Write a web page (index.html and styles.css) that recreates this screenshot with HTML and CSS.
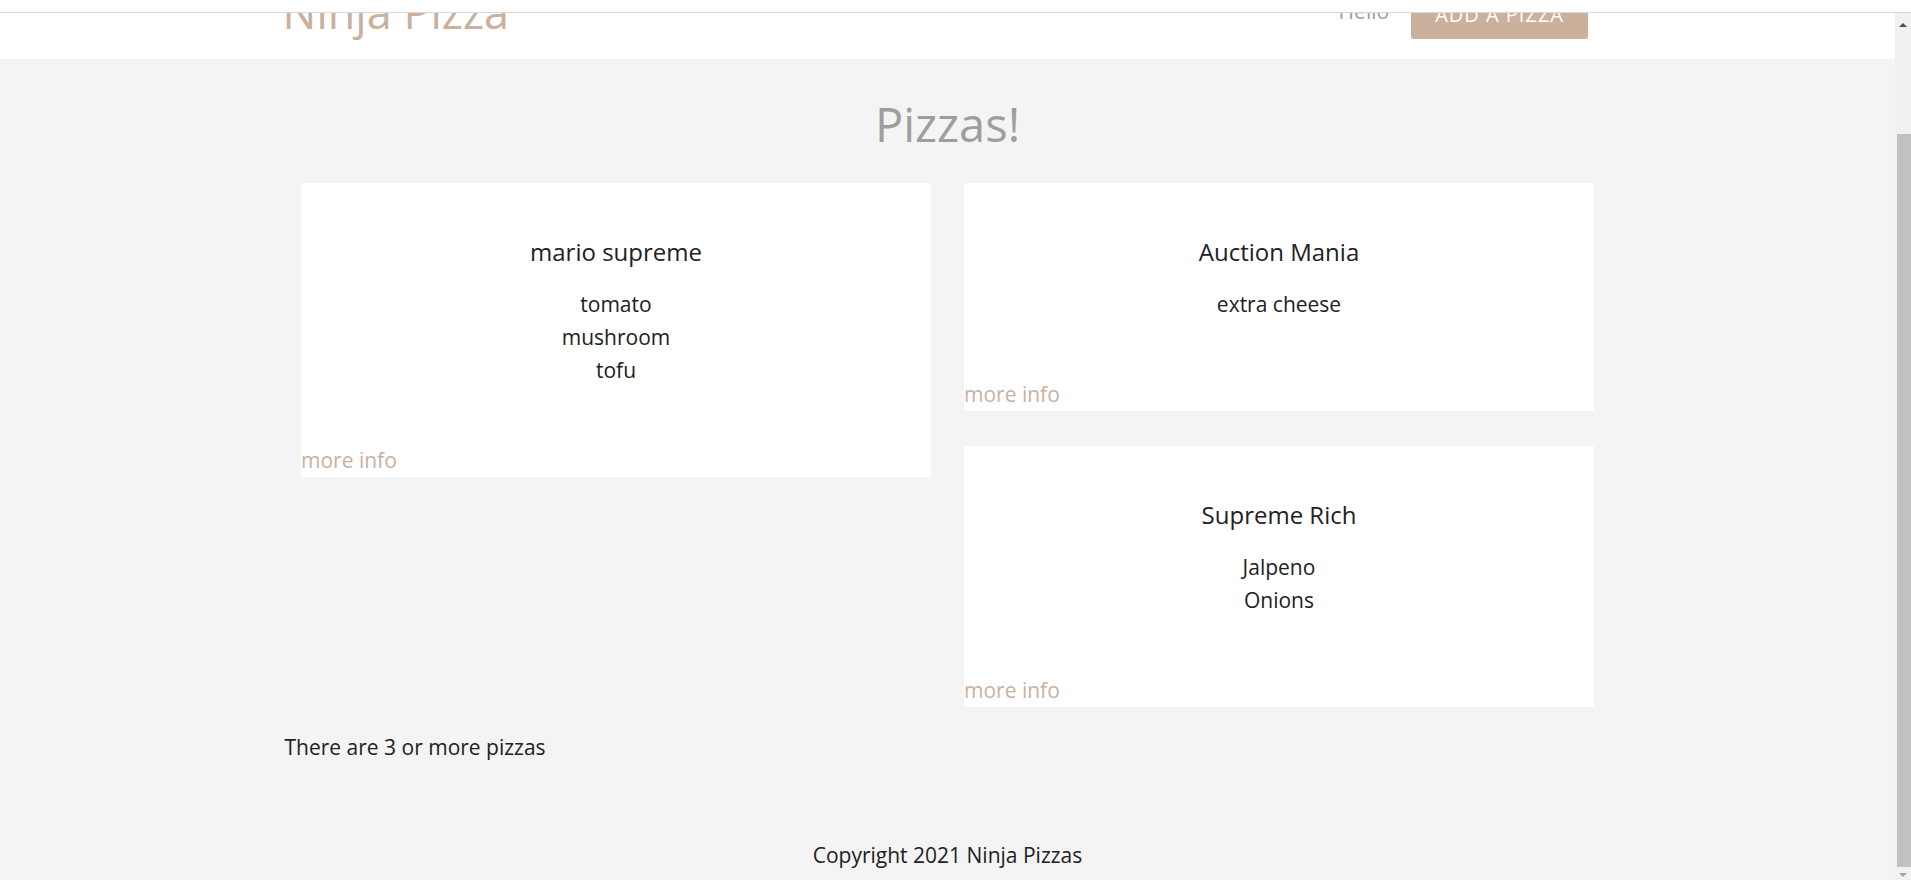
FILE: index.html
```html
<!DOCTYPE html>
<html lang="en">
<head>
<meta charset="utf-8">
<title>Ninja Pizza</title>
<link rel="stylesheet" href="styles.css">
</head>
<body>
  <div class="topbar"></div>
  <div class="window">
    <div class="viewport">
      <div class="page">
        <nav class="nav">
          <div class="nav-inner">
            <a href="#" class="brand-logo">Ninja Pizza</a>
            <div class="nav-right">
              <span class="hello">Hello</span>
              <a href="#" class="btn">Add a Pizza</a>
            </div>
          </div>
        </nav>

        <h4 class="title">Pizzas!</h4>

        <div class="cards">
          <div class="col">
            <div class="card">
              <h6 class="card-title">mario supreme</h6>
              <ul class="ingredients">
                <li>tomato</li>
                <li>mushroom</li>
                <li>tofu</li>
              </ul>
              <div class="card-action"><a href="#" class="more">more info</a></div>
            </div>
          </div>
          <div class="col">
            <div class="card">
              <h6 class="card-title">Auction Mania</h6>
              <ul class="ingredients">
                <li>extra cheese</li>
              </ul>
              <div class="card-action"><a href="#" class="more">more info</a></div>
            </div>
            <div class="card">
              <h6 class="card-title">Supreme Rich</h6>
              <ul class="ingredients">
                <li>Jalpeno</li>
                <li>Onions</li>
              </ul>
              <div class="card-action"><a href="#" class="more">more info</a></div>
            </div>
          </div>
        </div>

        <p class="count">There are 3 or more pizzas</p>

        <footer class="footer">Copyright 2021 Ninja Pizzas</footer>
      </div>
    </div>
    <div class="scrollbar">
      <div class="sb-up"><span class="tri-up"></span></div>
      <div class="sb-thumb"></div>
      <div class="sb-down"><span class="tri-down"></span></div>
    </div>
  </div>
</body>
</html>
```

FILE: styles.css
```css
html, body {
  margin: 0;
  padding: 0;
  height: 100%;
}

body {
  font-family: "Open Sans", "Noto Sans", sans-serif;
  color: #212121;
  background: #ffffff;
  overflow: hidden;
}

a {
  text-decoration: none;
}

.topbar {
  height: 12px;
  background: #ffffff;
  border-bottom: 1px solid #d8d8d8;
}

.window {
  display: flex;
  height: 867px;
}

.viewport {
  flex: 1;
  overflow: hidden;
  background: #f4f4f4;
}

.page {
  margin-top: -30px;
}

/* header */
.nav {
  height: 76px;
  background: #ffffff;
}

.nav-inner {
  width: 1330px;
  margin: 0 auto;
  display: flex;
  align-items: flex-start;
}

.brand-logo {
  font-size: 45px;
  line-height: 45px;
  margin-top: 6px;
  color: #cbb09c;
}

.nav-right {
  margin-left: auto;
  margin-right: 24.5px;
  display: flex;
  align-items: flex-start;
  gap: 22px;
}

.hello {
  font-size: 21px;
  line-height: 21px;
  margin-top: 18px;
  color: #9e9e9e;
}

.btn {
  display: block;
  margin-top: 7px;
  height: 49px;
  line-height: 49px;
  padding: 0 24px;
  font-size: 20px;
  letter-spacing: 1px;
  text-transform: uppercase;
  color: #ffffff;
  background: #cbb09c;
  border-radius: 3px;
}

/* main */
.title {
  margin: 37px 0 31px;
  text-align: center;
  font-size: 47px;
  line-height: 56px;
  font-weight: 400;
  color: #9e9e9e;
}

.cards {
  display: flex;
  justify-content: center;
  align-items: flex-start;
  gap: 33px;
}

.col {
  width: 630px;
  display: flex;
  flex-direction: column;
  gap: 35px;
}

.card {
  background: #ffffff;
  border-radius: 2px;
  padding-top: 53px;
  text-align: center;
}

.card-title {
  margin: 0;
  font-size: 24px;
  line-height: 32px;
  font-weight: 400;
}

.ingredients {
  list-style: none;
  margin: 20px 0 0;
  padding: 0;
  font-size: 21px;
  line-height: 33px;
}

.card-action {
  margin-top: 57px;
  text-align: left;
  font-size: 21px;
  line-height: 33px;
}

.more {
  color: #cbb09c;
}

.count {
  width: 1326px;
  margin: 24px auto 0;
  font-size: 21px;
  line-height: 33px;
}

.footer {
  margin-top: 75px;
  text-align: center;
  font-size: 21px;
  line-height: 33px;
}

/* scrollbar */
.scrollbar {
  width: 16px;
  background: #f1f1f1;
  display: flex;
  flex-direction: column;
}

.sb-up {
  height: 24px;
  display: flex;
  align-items: center;
  justify-content: center;
}

.tri-up {
  width: 0;
  height: 0;
  border-left: 4px solid transparent;
  border-right: 4px solid transparent;
  border-bottom: 4px solid #505050;
}

.sb-thumb {
  margin-top: 97px;
  margin-left: 2px;
  height: 733px;
  background: #c1c1c1;
}

.sb-down {
  margin-top: 6px;
  display: flex;
  justify-content: center;
}

.tri-down {
  width: 0;
  height: 0;
  border-left: 4px solid transparent;
  border-right: 4px solid transparent;
  border-top: 4px solid #a3a3a3;
}
```
